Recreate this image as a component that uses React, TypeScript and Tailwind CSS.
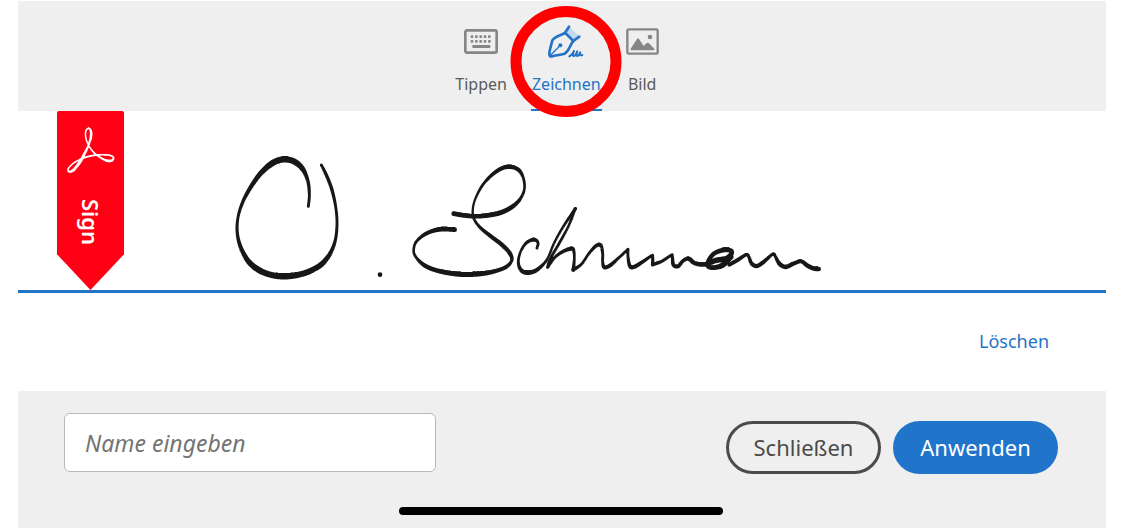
import React, { useState } from 'react'

// x, y, pen width
type Point = [number, number, number]

const initial: Point[] = [
  [265, 199, 9], [268, 165, 9], [264, 125, 11], [248, 87, 15], [223, 65, 18], [191, 58, 19],
  [158, 69, 18], [125, 97, 15], [94, 139, 13], [69, 185, 11], [54, 232, 9], [52, 280, 10],
  [64, 327, 13], [87, 366, 16], [120, 392, 18], [155, 405, 18], [192, 409, 19], [232, 405, 18],
  [270, 393, 17], [304, 373, 16], [330, 342, 13], [346, 300, 10], [351, 250, 9], [347, 200, 9],
  [336, 150, 11], [321, 110, 11], [304, 75, 9],
]

const capital: Point[] = [
  [161, 191, 14], [190, 196, 14], [225, 199, 13], [265, 196, 14], [305, 187, 15], [340, 168, 13],
  [362, 145, 10], [373, 118, 8], [371, 88, 9], [358, 62, 12], [335, 51, 13], [308, 54, 13],
  [278, 73, 11], [250, 103, 9], [230, 138, 8], [219, 172, 7], [221, 205, 8], [240, 232, 10],
  [270, 257, 12], [305, 284, 13], [330, 311, 13], [335, 332, 10], [318, 351, 12], [280, 365, 13],
  [235, 372, 15], [180, 373, 15], [120, 364, 14], [75, 347, 13], [48, 322, 9], [41, 300, 8],
  [50, 274, 9], [80, 250, 12], [120, 238, 14], [164, 239, 14],
]

const letterC: Point[] = [
  [411, 294, 9], [414, 278, 9], [402, 269, 12], [380, 278, 10], [362, 305, 8], [355, 335, 9],
  [362, 359, 12], [380, 368, 14], [405, 363, 13], [428, 345, 10], [444, 324, 8], [461, 283, 8],
  [487, 235, 8], [526, 176, 10],
]

const letterH: Point[] = [
  [526, 176, 10], [505, 230, 8], [475, 285, 9], [452, 325, 10], [443, 352, 10], [443, 352, 10],
  [465, 322, 9], [490, 304, 11], [514, 296, 13], [521, 302, 10], [523, 325, 8], [520, 359, 12],
]

const tail: Point[] = [
  [520, 359, 12], [545, 342, 9], [568, 309, 9], [589, 287, 11], [602, 286, 12], [608, 310, 9],
  [608, 335, 9], [613, 352, 12], [632, 345, 12], [660, 320, 9], [684, 298, 9], [684, 298, 9],
  [684, 320, 9], [690, 349, 12], [704, 350, 13], [730, 334, 11], [755, 317, 9], [758, 320, 9],
  [758, 344, 11], [758, 344, 11], [785, 334, 10], [813, 316, 9], [817, 318, 9], [820, 344, 12],
  [834, 349, 12], [850, 332, 11], [866, 326, 13], [885, 340, 13], [915, 343, 14], [945, 332, 16],
  [980, 325, 16], [995, 310, 14], [990, 301, 14], [970, 300, 15], [942, 311, 13], [924, 335, 13],
  [924, 350, 12], [942, 353, 14], [968, 345, 16], [994, 321, 14], [994, 321, 12],
]

const ending: Point[] = [
  [988, 344, 12], [1013, 330, 12], [1039, 314, 10], [1047, 322, 10], [1055, 341, 12], [1071, 348, 13],
  [1092, 335, 12], [1119, 312, 9], [1127, 322, 10], [1138, 341, 13], [1157, 351, 13],
  [1180, 341, 13], [1203, 334, 12], [1221, 346, 13], [1240, 355, 14], [1256, 357, 14],
]

const acrobat: Point[] = [
  [262, 137, 6], [270, 112, 8], [271, 92, 8], [264, 82, 5], [256, 89, 5], [255, 107, 5],
  [263, 132, 5], [280, 155, 5], [303, 172, 6], [323, 180, 8], [336, 177, 7], [337, 167, 5],
  [320, 162, 5], [290, 162, 5], [255, 169, 5], [222, 184, 5], [203, 203, 5], [206, 212, 6],
  [220, 206, 9], [240, 180, 10], [255, 152, 8], [262, 137, 6],
]

const mix = (a: number, b: number, c: number, d: number, t: number) =>
  0.5 * (2 * b + (c - a) * t + (2 * a - 5 * b + 4 * c - d) * t * t + (3 * b - a - 3 * c + d) * t * t * t)

// Lays round pen marks along a smooth curve so that the width can vary
const inkPath = (points: Point[]) => {
  const marks: string[] = []
  for (let i = 0; i < points.length - 1; i++) {
    const a = points[Math.max(i - 1, 0)]
    const b = points[i]
    const c = points[i + 1]
    const d = points[Math.min(i + 2, points.length - 1)]
    const steps = Math.max(1, Math.ceil(Math.hypot(c[0] - b[0], c[1] - b[1])))
    for (let s = 0; s <= steps; s++) {
      const t = s / steps
      const x = mix(a[0], b[0], c[0], d[0], t)
      const y = mix(a[1], b[1], c[1], d[1], t)
      const r = (b[2] + (c[2] - b[2]) * t) / 2
      marks.push(`M${(x - r).toFixed(1)} ${y.toFixed(1)}a${r} ${r} 0 1 0 ${2 * r} 0a${r} ${r} 0 1 0 ${-2 * r} 0`)
    }
  }
  return marks.join('')
}

const Ink = ({ points }: { points: Point[] }) => <path d={inkPath(points)} />

const Signature = () => (
  <svg viewBox="0 0 1860 450" className="h-[150px] w-[620px]" fill="#171717" role="img" aria-label="Unterschrift">
    <Ink points={initial} />
    <circle cx="480" cy="404" r="7" />
    <g transform="translate(540 30)">
      <Ink points={capital} />
      <Ink points={letterC} />
      <Ink points={letterH} />
      <Ink points={tail} />
      <Ink points={ending} />
    </g>
  </svg>
)

const KeyboardIcon = () => (
  <svg viewBox="0 0 102 75" className="h-[25px] w-[34px]" fill="#868686">
    <rect x="4" y="4" width="94" height="67" rx="5" fill="none" stroke="#868686" strokeWidth="8" />
    {[23, 36, 49, 62, 75].map((x) => (
      <g key={x}>
        <rect x={x - 3} y="19" width="8" height="8" rx="2" />
        <rect x={x - 3} y="33" width="8" height="8" rx="2" />
      </g>
    ))}
    <rect x="25" y="48" width="54" height="9" rx="2" />
  </svg>
)

const PenIcon = () => (
  <svg
    viewBox="318 70 114 105"
    className="h-[35px] w-[38px]"
    fill="none"
    stroke="#2474c6"
    strokeWidth="8"
    strokeLinecap="round"
    strokeLinejoin="round"
  >
    <path d="M386 80L414 106L398 120L373 97Z" fill="#c3d8ef" stroke="none" />
    <path d="M384 78L372 96L397 121L415 108" />
    <path d="M372 97C358 105 341 107 334 119C331 134 325 148 325 161C325 166 328 168 333 167C345 164 358 163 371 159C385 151 386 133 397 121" />
    <path d="M329 163L357 135" strokeWidth="4" />
    <circle cx="358" cy="134" r="6" fill="#2474c6" stroke="none" />
    <path d="M385 167C392 163 397 157 399 151C396 159 394 166 398 166C403 166 407 157 409 152C406 160 405 166 409 166C413 166 416 159 418 155C415 162 417 166 424 163" strokeWidth="6" />
  </svg>
)

const ImageIcon = () => (
  <svg viewBox="0 0 99 81" className="h-[27px] w-[33px]" fill="#868686">
    <rect x="4" y="4" width="91" height="73" rx="4" fill="none" stroke="#868686" strokeWidth="7" />
    <circle cx="72" cy="27" r="7" />
    <path d="M14 67V62L33 33Q36 29 39 33L53 54L61 46Q65 42 69 46L85 62V67Z" />
  </svg>
)

const tabs = [
  { id: 'type', label: 'Tippen', icon: <KeyboardIcon /> },
  { id: 'draw', label: 'Zeichnen', icon: <PenIcon /> },
  { id: 'image', label: 'Bild', icon: <ImageIcon /> },
]

const App = () => {
  const [tab, setTab] = useState('draw')
  const [name, setName] = useState('')

  return (
    <div className="flex min-h-screen flex-col bg-white px-[18px] pt-px font-['Noto_Sans',sans-serif]">
      <nav className="flex h-[110px] justify-center gap-6 bg-[#efefef] pr-2.5">
        {tabs.map(({ id, label, icon }) => (
          <button
            key={id}
            type="button"
            onClick={() => setTab(id)}
            className={
              tab === id
                ? 'relative flex flex-col items-center border-b-2 border-[#2474c6] px-px pt-5 text-base text-[#2474c6]'
                : 'relative flex flex-col items-center border-b-2 border-transparent pt-5 text-base text-[#5a5a5a]'
            }
          >
            <span className="flex h-10 items-center">{icon}</span>
            <span className="mt-[11px] leading-6">{label}</span>
            {id === 'draw' && (
              <span className="pointer-events-none absolute top-[5px] left-1/2 size-[111px] -translate-x-1/2 rounded-full border-[11px] border-[#fe0000]" />
            )}
          </button>
        ))}
      </nav>

      <main>
        <div className="flex border-b-3 border-[#2474c6] pl-[39px]">
          <div className="flex h-[179px] w-[67px] shrink-0 flex-col items-center rounded-t-xs bg-[#ff0015] pt-3.5 text-white [clip-path:polygon(0_0,100%_0,100%_80%,50%_100%,0_80%)]">
            <svg viewBox="196 72 150 150" className="size-[50px]" fill="white" aria-hidden="true">
              <Ink points={acrobat} />
            </svg>
            <span className="mt-6 text-[22px] leading-6 font-semibold [writing-mode:vertical-rl]">Sign</span>
          </div>
          <div className="ml-24 pt-[29px]">
            <Signature />
          </div>
        </div>
        <div className="flex h-[98px] items-center justify-end pr-[57px] pb-0.5">
          <button type="button" className="text-lg text-[#2474c6]">
            Löschen
          </button>
        </div>
      </main>

      <footer className="flex-1 bg-[#efefef] pt-[22px] pr-12 pb-3 pl-[46px]">
        <div className="flex items-start justify-between">
          <input
            type="text"
            aria-label="Name eingeben"
            placeholder="Name eingeben"
            value={name}
            onChange={(e) => setName(e.target.value)}
            className="h-[59px] w-[372px] rounded-md border border-[#b8b8b8] bg-white px-5 text-[23px] text-[#4b4b4b] placeholder:text-[#747474] placeholder:italic"
          />
          <div className="flex gap-3 pt-2">
            <button type="button" className="h-[53px] w-[155px] rounded-full border-3 border-[#4b4b4b] text-[22px] text-[#4b4b4b]">
              Schließen
            </button>
            <button type="button" className="h-[53px] w-[165px] rounded-full bg-[#2074ca] text-[22px] text-white">
              Anwenden
            </button>
          </div>
        </div>
        <div className="mx-auto mt-[33px] h-2 w-[324px] rounded-full bg-black" />
      </footer>
    </div>
  )
}

export default App
